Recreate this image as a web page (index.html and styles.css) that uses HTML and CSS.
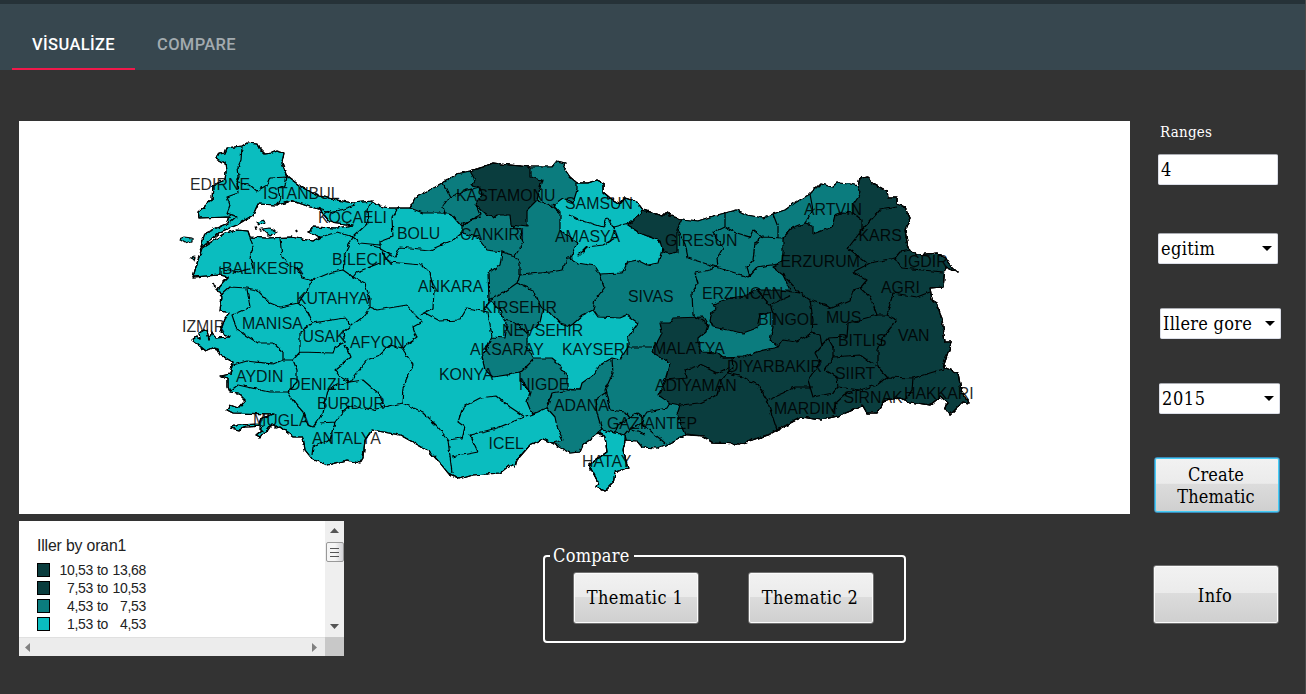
FILE: index.html
```html
<!DOCTYPE html>
<html lang="tr">
<head>
<meta charset="utf-8">
<title>Thematic map</title>
<link rel="stylesheet" href="styles.css">
</head>
<body>
<header class="header">
  <nav class="tabs">
    <a class="tab tab-active">VİSUALİZE</a>
    <a class="tab">COMPARE</a>
  </nav>
</header>
<main class="content">
  <div class="left">
    <section class="map-panel">
      <svg class="map" viewBox="19 121 1111 393" width="1111" height="393">
        <defs>
          <filter id="rough" filterUnits="userSpaceOnUse" x="170" y="130" width="810" height="370" color-interpolation-filters="sRGB">
            <feTurbulence type="fractalNoise" baseFrequency="0.17" numOctaves="2" seed="4" result="n"/>
            <feDisplacementMap in="SourceGraphic" in2="n" scale="4" xChannelSelector="R" yChannelSelector="G"/>
          </filter>
          <path id="coast" d="M242,146 247,143 257,144 259,148 265,154 272,153 277,151 284,153 283,158 282,163 286,173 288,177 303,188 320,196 337,200 353,203 372,201 380,206 390,208 410,208 415,198 430,190 443,183 457,174 470,171 483,167 493,163 510,165 530,167 552,167 557,161 565,163 563,167 570,177 577,183 588,183 597,180 603,183 603,192 610,198 620,204 625,198 637,202 643,210 662,216 667,211 670,216 682,219 698,221 710,217 725,213 737,210 747,215 763,218 773,214 785,210 795,203 810,194 820,184 832,187 837,183 850,184 858,186 860,178 869,177 872,183 887,191 888,197 897,197 897,204 905,207 910,218 905,230 907,242 910,250 917,255 937,253 945,257 950,265 958,273 945,267 943,287 930,288 932,300 937,303 942,320 945,342 952,342 948,353 943,367 958,373 961,390 969,403 963,402 950,415 945,408 947,403 940,397 930,405 910,402 900,398 885,400 877,413 867,413 863,406 838,416 820,420 802,417 777,430 770,434 740,444 713,443 703,436 687,434 665,445 657,448 642,447 637,441 625,440 623,450 628,468 615,472 613,483 605,491 596,487 598,482 589,465 607,452 605,437 598,433 583,445 580,452 570,453 552,443 543,439 530,445 517,460 515,467 510,465 500,473 473,475 460,479 448,473 440,463 430,452 420,446 400,435 372,430 365,440 363,458 360,463 347,460 328,465 313,460 305,450 303,437 293,437 280,427 276,428 272,424 268,430 264,432 260,437 256,435 262,430 259,427 263,426 246,427 239,430 231,428 237,425 260,424 262,418 274,414 233,413 227,410 230,405 238,408 245,400 238,393 230,392 228,387 228,378 221,376 230,374 233,362 220,355 215,347 206,351 192,340 196,337 200,339 199,333 204,330 207,331 209,339 212,332 215,338 230,337 220,332 225,318 229,313 220,311 222,297 217,289 223,282 228,277 220,275 193,277 198,260 202,248 225,233 237,230 248,231 250,237 267,238 290,237 313,241 320,237 308,232 313,227 337,228 353,225 330,222 319,209 310,207 293,201 277,205 258,204 253,215 237,225 220,232 201,247 205,233 228,223 230,217 199,218 198,212 212,200 213,185 225,180 226,172 225,163 216,158 218,154 225,153 227,148Z"/>
          <clipPath id="land"><use href="#coast"/></clipPath>
        </defs>
        <g class="shapes" filter="url(#rough)">
          <use class="low" href="#coast"/>
          <path class="low" d="M179,239 184,237 192,238 192,241 185,243ZM257,222 263,220 266,223 260,225ZM262,229 270,228 277,232 270,236ZM190,258 195,257 194,260Z"/>
          <path class="isle" d="M255,228 257,227M297,229 298,231M259,231 261,230M214,283 215,288"/>
          <path class="mid" clip-path="url(#land)" d="M410,208 423,213 450,213 462,227 462,233 477,237 487,250 502,252 500,265 488,273 489,300 500,309 503,320 507,325 505,338 492,337 482,357 485,370 493,377 520,373 520,380 530,392 527,402 532,414 547,408 555,417 557,427 563,440 552,443 560,460 590,460 602,430 615,433 625,435 630,455 720,450 900,350 880,160 700,190 540,150 420,180Z"/>
          <path class="low" d="M577,183 577,190 573,203 563,198 553,205 560,213 560,230 577,243 570,258 578,263 595,266 600,274 622,273 628,262 637,260 647,265 658,263 663,245 660,241 640,233 627,225 637,217 643,210 637,202 625,198 620,204 610,198 603,192 603,183 597,180 588,183Z"/>
          <path class="low" d="M543,310 548,310 560,323 570,326 573,324 583,315 593,310 598,317 620,318 627,315 638,323 628,337 628,347 620,360 612,358 600,365 593,375 582,383 580,390 567,389 567,377 557,362 552,358 533,358 527,347 527,333 540,322Z"/>
          <path class="low" d="M602,430 615,433 625,435 625,440 623,450 628,468 615,472 613,483 605,491 596,487 598,482 589,465 607,452 605,437 598,433Z"/>
          <path class="high" d="M470,171 475,180 472,185 480,187 482,195 476,205 485,213 493,218 497,215 510,215 511,225 527,227 527,210 537,200 542,180 530,177 530,167 510,165 493,163 483,167Z"/>
          <path class="high" d="M643,210 637,217 627,225 640,233 660,241 663,252 670,254 677,252 677,230 682,219 670,216 667,211 662,216Z"/>
          <path class="high" d="M858,186 861,193 853,205 853,213 843,212 835,215 832,227 813,234 813,225 805,223 792,228 783,238 783,252 782,262 772,267 783,275 790,290 780,290 757,290 745,296 730,298 713,304 717,309 712,312 710,320 713,327 743,333 757,328 760,315 773,312 773,327 770,340 778,347 760,351 743,357 723,358 717,353 703,352 698,345 698,338 706,331 708,325 703,317 673,318 670,323 660,323 662,333 652,352 670,363 665,380 658,395 670,403 680,405 677,415 685,435 703,436 713,443 740,444 770,434 777,430 802,417 820,420 838,416 863,406 867,413 877,413 885,400 900,398 910,402 930,405 940,397 947,403 945,408 950,415 963,402 969,403 961,390 958,373 943,367 948,353 952,342 945,342 942,320 937,303 932,300 930,288 943,287 945,267 958,273 950,265 945,257 937,253 917,255 910,250 907,242 905,230 910,218 905,207 897,204 897,197 888,197 887,191 872,183 869,177 860,178Z"/>
          <use class="border" href="#coast"/>
          <path class="border" d="M242,147 241,160 238,167 239,177 237,182 238,193 227,197 230,205 227,213 237,217 230,223M238,183 250,185 257,191 267,185 270,178 287,177 285,185 278,188 280,198 277,205M250,238 253,247 250,258 253,268 238,272 220,268 220,275M280,238 282,257 288,265 297,267 302,277 313,280M220,296 230,287 247,288 257,290 270,303 280,307 298,303M247,289 250,307 232,315 237,330 258,343 273,343 283,352 283,360M318,238 337,232 353,237 345,253 343,270 332,272 313,280 303,297 298,303 308,312 313,323 345,318 352,325 363,317 370,307M353,237 360,243 380,245M372,201 367,210 368,223 353,237M318,208 333,213 340,210 355,205M343,270 353,277 357,272 380,263M353,277 365,283 370,300 370,307 377,310 407,305 413,313 422,322 413,327 417,338 402,348 413,365 403,388 402,403M313,323 300,332 300,352 293,360 283,360 273,364 247,361 233,365M300,352 333,353 335,347 345,342 343,333 352,325M345,345 350,357 335,370 340,377 350,382 367,360 380,355 390,345 402,348M293,360 297,370 297,383 288,392 270,392 238,385 230,391M288,392 295,403 303,412 308,425 313,427 323,413 328,390 337,385 350,382 363,380 378,393 385,407M312,455 313,447 330,440 335,422 320,423M335,422 343,412 350,406 373,410 385,407 402,403 423,412 438,427 448,440 452,473"/>
          <path class="border" d="M398,208 392,218 393,237 380,242 380,248 388,262 422,265 430,273 434,290 433,308 420,315M370,245 380,248 395,257 400,247 430,250 453,240 462,233M443,183 450,197 443,207 445,213M450,197 467,190 480,187M476,205 480,215 460,225M480,217 470,220 462,227M511,225 520,230 523,243 515,256 502,252M515,256 520,263 520,275 550,272 563,270 567,258 573,258M520,275 517,283 503,293 488,300M517,283 533,290 537,300 543,310M537,200 550,205 560,213M570,215 580,220 603,227 607,218 613,227 633,222M613,227 617,237 603,245 587,247 577,257M600,274 605,287 595,300 593,310M677,230 685,243 688,258 710,265 748,277 757,267 778,264M725,213 725,227 713,233 723,248 717,258 718,266M725,227 737,233 750,237 753,230 763,237 755,243 753,260 747,267 750,277M763,237 783,238M773,214 778,227 778,238M718,266 710,270 695,273 698,283 692,293 693,315 708,325"/>
          <path class="border" d="M810,194 813,210 805,223M853,213 862,220 862,230 848,248 867,263M862,230 880,210 897,207M943,272 902,268 895,258 870,263 853,272 867,280 860,288 853,290 850,300 832,308 810,300 800,293 780,290M895,258 900,252 910,250M860,288 870,297 877,315 887,315 893,293 917,297 930,292M783,275 800,293M810,300 813,320 812,333 795,342 783,340 778,347M812,333 820,335 822,345 815,353 820,362 808,380 813,397 833,393 838,387M822,345 828,338 847,337 848,323 877,315M828,338 833,347 833,357 825,370 837,377 838,387 860,390 877,385 887,377 878,367 878,350 883,337 897,320 887,315M833,357 860,355 870,362 878,367M887,377 913,378 947,368M913,378 912,390 905,400M833,413 837,402 847,393 860,390M767,400 783,393 795,387 812,387M757,290 770,305 790,296M770,305 773,312"/>
          <path class="border" d="M723,358 732,358 733,368 727,373 743,377 758,385 767,400 777,430M665,380 687,378 685,370 700,365 717,373 730,367M680,405 700,403 717,395 720,383 727,373M628,347 652,347M612,360 613,373 605,390 610,410 625,412 630,418 637,413 643,418 647,412 667,408 670,403M605,393 595,400 597,413 602,430M625,435 630,429 642,423 643,418M642,423 653,433 665,443M630,418 618,425 615,433M630,429 645,435M425,313 440,321 460,320 467,308 488,312 490,325 492,337M448,440 462,438 465,427 458,422 463,407 480,398 497,396 510,407 525,417M452,457 478,452 470,435 497,428 517,420 532,414M547,408 552,393 570,390 580,390M503,320 515,322 527,333M520,373 533,360M489,300 485,310"/>
        </g>
        <g class="labels">
          <text x="190" y="190">EDIRNE</text><text x="263" y="199">ISTANBUL</text><text x="318" y="223">KOCAELI</text><text x="222" y="274">BALIKESIR</text><text x="332" y="265">BILECIK</text><text x="296" y="304">KUTAHYA</text><text x="456" y="201">KASTAMONU</text><text x="397" y="239">BOLU</text><text x="460" y="240">CANKIRI</text><text x="418" y="292">ANKARA</text><text x="565" y="209">SAMSUN</text><text x="555" y="242">AMASYA</text><text x="665" y="246">GIRESUN</text><text x="628" y="302">SIVAS</text><text x="702" y="299">ERZINCAN</text><text x="804" y="215">ARTVIN</text><text x="858.500" y="241">KARS</text><text x="903.500" y="267">IGDIR</text><text x="780.500" y="267">ERZURUM</text><text x="881" y="293">AGRI</text><text x="182" y="332">IZMIR</text><text x="242" y="329">MANISA</text><text x="302.500" y="342">USAK</text><text x="350" y="348">AFYON</text><text x="236" y="382">AYDIN</text><text x="289" y="390">DENIZLI</text><text x="317" y="409">BURDUR</text><text x="253" y="426">MUGLA</text><text x="312" y="444">ANTALYA</text><text x="482" y="313">KIRSEHIR</text><text x="502" y="336">NEVSEHIR</text><text x="470" y="355">AKSARAY</text><text x="562" y="355">KAYSERI</text><text x="439" y="380">KONYA</text><text x="519" y="390">NIGDE</text><text x="554" y="411">ADANA</text><text x="488.500" y="449">ICEL</text><text x="653" y="354">MALATYA</text><text x="655" y="391">ADIYAMAN</text><text x="607" y="429">GAZIANTEP</text><text x="582" y="467">HATAY</text><text x="727" y="372">DIYARBAKIR</text><text x="758" y="325">BINGOL</text><text x="826" y="323">MUS</text><text x="838" y="346">BITLIS</text><text x="898" y="341">VAN</text><text x="835" y="379">SIIRT</text><text x="843.500" y="403">SIRNAK</text><text x="904" y="399">HAKKARI</text><text x="774" y="414">MARDIN</text>
        </g>
      </svg>
    </section>
    <div class="bottom">
      <section class="legend">
        <div class="legend-body">
          <h2 class="legend-title">Iller by oran1</h2>
          <ul class="legend-list">
            <li><i class="swatch sw-high"></i><span class="from">10,53</span><span class="to">to</span><span class="until">13,68</span></li>
            <li><i class="swatch sw-high"></i><span class="from">7,53</span><span class="to">to</span><span class="until">10,53</span></li>
            <li><i class="swatch sw-mid"></i><span class="from">4,53</span><span class="to">to</span><span class="until">7,53</span></li>
            <li><i class="swatch sw-low"></i><span class="from">1,53</span><span class="to">to</span><span class="until">4,53</span></li>
          </ul>
        </div>
        <div class="vbar">
          <svg width="9" height="5"><path d="M0,5 4.500,0 9,5Z"/></svg>
          <div class="thumb"><i></i><i></i><i></i></div>
          <svg class="down" width="9" height="5"><path d="M0,0 9,0 4.500,5Z"/></svg>
        </div>
        <div class="hbar">
          <svg width="5" height="9"><path d="M5,0 5,9 0,4.500Z"/></svg>
          <svg width="5" height="9"><path d="M0,0 5,4.500 0,9Z"/></svg>
        </div>
        <div class="corner"></div>
      </section>
      <fieldset class="compare">
        <legend>Compare</legend>
        <button class="btn">Thematic 1</button>
        <button class="btn">Thematic 2</button>
      </fieldset>
    </div>
  </div>
  <aside class="side">
    <label class="side-label">Ranges</label>
    <div class="field field-ranges">4</div>
    <div class="field field-topic">egitim<svg class="arrow" width="10" height="5"><path d="M0,0H10L5,5Z"/></svg></div>
    <div class="field field-area">Illere gore<svg class="arrow" width="10" height="5"><path d="M0,0H10L5,5Z"/></svg></div>
    <div class="field field-year">2015<svg class="arrow" width="10" height="5"><path d="M0,0H10L5,5Z"/></svg></div>
    <button class="btn btn-create">Create<br>Thematic</button>
    <button class="btn btn-info">Info</button>
  </aside>
</main>
</body>
</html>
```
FILE: styles.css
```css
* { box-sizing: border-box; }
body {
  margin: 0;
  height: 694px;
  overflow: hidden;
  background: #333;
  border-right: 1px solid #4a4a4a;
  font-family: "DejaVu Serif Condensed", "DejaVu Serif", serif;
  font-stretch: condensed;
  font-size: 18px;
  letter-spacing: .25px;
  color: #fff;
}
.header {
  height: 70px;
  margin-right: -1px;
  padding-left: 12px;
  border-top: 4px solid #263238;
  background: #37474f;
}
.tabs { display: flex; height: 66px; }
.tab {
  width: 123px;
  padding-top: 16px;
  text-align: center;
  font: 500 16.5px/50px Roboto, sans-serif;
  font-stretch: normal;
  letter-spacing: .35px;
  color: #a3abaf;
}
.tab-active { color: #fff; border-bottom: 2px solid #f0194b; }
.content { display: flex; padding: 51px 0 0 19px; }
.left { width: 1111px; }
.map-panel { height: 393px; background: #fff; }
.map { display: block; }
.shapes path, .shapes use { stroke: #000; stroke-width: 1.2; stroke-linejoin: round; }
.shapes .low { fill: #0abdbf; }
.shapes .mid { fill: #0b7c7e; }
.shapes .high { fill: #0a3d3e; }
.shapes .isle { fill: none; stroke-width: 2; }
.shapes .border { fill: none; }
.labels {
  font: 15.9px "Liberation Sans", Arial, sans-serif;
  letter-spacing: 0;
  fill: #000;
  fill-opacity: .86;
}

.bottom { display: flex; align-items: flex-start; padding-top: 7px; }
.legend {
  display: grid;
  grid-template: 116px 19px / 306px 19px;
  width: 325px;
  background: #fff;
  color: #222;
  font: 14px "Liberation Sans", Arial, sans-serif;
}
.legend-body { padding: 15px 0 0 18px; }
.legend-title { margin: 0; font-size: 15.8px; font-weight: 400; line-height: 19px; letter-spacing: -.15px; }
.legend-list { margin: 7px 0 0; padding: 0; list-style: none; }
.legend-list li { display: flex; height: 18px; line-height: 17px; }
.swatch { width: 13px; height: 14px; margin-top: 1px; border: 1px solid #000; }
.sw-high { background: #0a3d3e; }
.sw-mid { background: #0b7c7e; }
.sw-low { background: #0abdbf; }
.from { width: 43px; text-align: right; }
.to { width: 15px; text-align: right; }
.until { width: 38px; text-align: right; }
.from, .to, .until { letter-spacing: -.3px; }
.vbar { display: flex; flex-direction: column; align-items: center; padding-top: 7px; background: #efefef; }
.vbar svg, .hbar svg { display: block; fill: #555; }
.thumb {
  display: flex; flex-direction: column; gap: 3px; align-items: center; justify-content: center;
  width: 18px; height: 20px; margin-top: 9px;
  border: 1px solid #999; border-radius: 2px;
  background: linear-gradient(90deg, #f5f5f5 50%, #d2d2d6);
}
.thumb i { width: 9px; height: 1px; background: #555; }
.vbar .down { margin-top: 62px; }
.hbar { display: flex; align-items: center; justify-content: space-between; padding: 0 8px 0 6px; background: #ececec; border-top: 1px solid #e0e0e0; }
.hbar svg { fill: #808080; }
.corner { background: #c8c8c8; }

.compare {
  display: flex;
  gap: 49px;
  width: 363px;
  height: 99px;
  margin: 23px 0 0 199px;
  padding: 4px 0 0 28px;
  border: 2px solid #fff;
  border-radius: 4px;
}
.compare legend { margin-left: -23px; padding: 0 4px 0 3px; line-height: 24px; }
.btn {
  width: 126px;
  height: 52px;
  padding: 0 2px 0 0;
  border: 1px solid #707070;
  border-radius: 3px;
  box-shadow: inset 0 0 0 1px #fbfbfb;
  background: linear-gradient(#f2f2f2, #ebebeb 47%, #dcdcdc 48%, #cfcfcf);
  font: inherit;
  letter-spacing: .45px;
  line-height: 22px;
  color: #000;
}
.side { display: flex; flex-direction: column; padding-left: 23px; }
.side-label { padding-left: 7px; font-size: 15px; line-height: 22px; }
.field {
  display: flex;
  align-items: center;
  justify-content: space-between;
  width: 121px;
  height: 31px;
  padding: 0 5px 0 2px;
  border: 1px solid #dcdfe8;
  border-top-color: #abadb3;
  border-radius: 2px;
  background: #fff;
  letter-spacing: .35px;
  color: #000;
}
.field-ranges, .field-topic { width: 120px; margin-left: 5px; }
.field-ranges { margin-top: 11px; }
.field-topic { margin-top: 48px; }
.field-area { margin: 44px 0 0 7px; letter-spacing: .25px; }
.field-year { margin: 44px 0 0 6px; letter-spacing: .6px; }
.btn-create {
  height: 56px;
  margin: 43px 0 0 1px;
  padding-top: 2px;
  border-color: #3c8ab8;
  box-shadow: inset 0 0 0 1px #45cdf5;
  letter-spacing: .1px;
}
.btn-info { height: 59px; margin-top: 52px; padding-top: 2px; }
```
